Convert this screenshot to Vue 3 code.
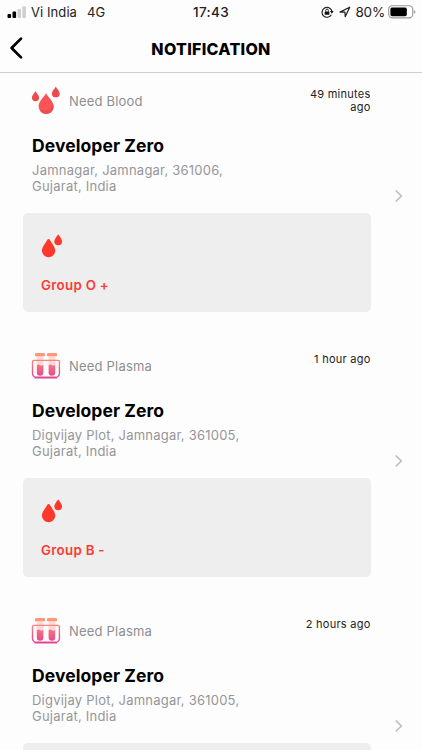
<script setup>
const requests = [
  { kind: 'blood', label: 'Need Blood', time: '49 minutes ago', name: 'Developer Zero', address: ['Jamnagar, Jamnagar, 361006,', 'Gujarat, India'], group: 'Group O +' },
  { kind: 'plasma', label: 'Need Plasma', time: '1 hour ago', name: 'Developer Zero', address: ['Digvijay Plot, Jamnagar, 361005,', 'Gujarat, India'], group: 'Group B -' },
  { kind: 'plasma', label: 'Need Plasma', time: '2 hours ago', name: 'Developer Zero', address: ['Digvijay Plot, Jamnagar, 361005,', 'Gujarat, India'], group: '' },
]
</script>

<template>
  <div class="screen">
    <div class="status">
      <div class="status-left">
        <svg class="signal" width="20" height="12" viewBox="0 0 20 12">
          <rect x="0.5" y="8" width="3.6" height="4" rx="1" fill="#000" />
          <rect x="5.5" y="5.5" width="3.6" height="6.5" rx="1" fill="#000" />
          <rect x="10.5" y="3" width="3.6" height="9" rx="1" fill="#cfcfcf" />
          <rect x="15.3" y="0.3" width="3.6" height="11.7" rx="1" fill="#cfcfcf" />
        </svg>
        <span class="carrier">Vi India</span>
        <span class="network">4G</span>
      </div>
      <div class="clock">17:43</div>
      <div class="status-right">
        <svg class="lock" width="13" height="12" viewBox="0 0 13 12" fill="none" stroke="#111">
          <path d="M10.4 8.8A5 5 0 1 1 10.9 5" stroke-width="1.1" />
          <path d="M9 5.1h3.6l-1.7 2.6z" fill="#111" stroke="none" />
          <rect x="3.7" y="5.4" width="4.7" height="3.3" rx="0.5" fill="#111" stroke="none" />
          <path d="M4.7 5.5V4.4a1.35 1.35 0 0 1 2.7 0v1.1" stroke-width="0.9" />
        </svg>
        <svg class="arrow" width="12" height="12" viewBox="0 0 12 12">
          <path d="M1 6.1L10.7 1.2L6.2 10.7L6 6.1z" fill="none" stroke="#222" stroke-width="1.2" stroke-linejoin="round" />
        </svg>
        <span class="percent">80%</span>
        <svg class="battery" width="28" height="14" viewBox="0 0 28 14">
          <rect x="0.7" y="0.7" width="24" height="12.2" rx="3.6" fill="#fff" stroke="#999" stroke-width="1.1" />
          <rect x="2.4" y="2.4" width="16.4" height="8.8" rx="1.6" fill="#000" />
          <path d="M25.8 4.7q1.7.7 1.7 2.2t-1.7 2.2z" fill="#aaa" />
        </svg>
      </div>
    </div>

    <header class="header">
      <svg class="back" width="14" height="22" viewBox="0 0 14 22">
        <path d="M12 1.6L2.6 11L12 20.4" fill="none" stroke="#000" stroke-width="2.7" stroke-linecap="round" stroke-linejoin="round" />
      </svg>
      <h1 class="title">NOTIFICATION</h1>
    </header>

    <main class="list">
      <article v-for="(item, i) in requests" :key="i" class="item">
        <div class="body">
          <div class="top">
            <svg v-if="item.kind === 'blood'" class="kind" width="30" height="30" viewBox="0 0 30 30">
              <path d="M15 7C16.5 10.6 22.6 15.2 22.6 20.4A7.4 7.4 0 0 1 7.6 20.4C7.6 15.2 13.5 10.6 15 7z" fill="#f95456" />
              <path d="M21.6 16.9c.7 1.2 1 2.3 1 3.5a7.4 7.4 0 0 1-13.8 3.7c6.4 1.7 12.2-1.6 12.8-7.2z" fill="#ee4c50" />
              <path d="M4.5 5C5.3 7.2 8.1 9.2 8.1 11.6a3.6 3.6 0 0 1-7.2 0C.9 9.2 3.7 7.2 4.5 5z" fill="#ea4b4f" />
              <path d="M24.8.6c.8 2.2 3.9 4.3 3.9 6.8a3.9 3.9 0 0 1-7.8 0c0-2.5 3.1-4.6 3.9-6.8z" fill="#ea4b4f" />
            </svg>
            <svg v-else class="kind" width="30" height="30" viewBox="0 0 30 30">
              <defs>
                <linearGradient :id="'tube' + i" x1="0" y1="1" x2="0" y2="28" gradientUnits="userSpaceOnUse">
                  <stop offset="0" stop-color="#ffa179" />
                  <stop offset="0.45" stop-color="#f5777f" />
                  <stop offset="1" stop-color="#e23e92" />
                </linearGradient>
              </defs>
              <g :fill="`url(#tube${i})`">
                <path d="M5.5 5.2h7v8.5h-7zM17.5 5.2h7v8.5h-7z" opacity="0.3" />
                <rect x="4" y="2" width="10" height="3.3" rx="0.7" />
                <rect x="16" y="2" width="10" height="3.3" rx="0.7" />
                <path d="M5.8 14q1.6-1.2 3.3 0t3.3-.2v7.7a3.3 3.3 0 0 1-6.6 0zM17.6 14q1.6-1.2 3.3 0t3.3-.2v7.7a3.3 3.3 0 0 1-6.6 0z" />
                <rect x="3.3" y="25.6" width="23" height="1.8" rx="0.6" />
              </g>
              <path d="M4 9.4H2.9A1.4 1.4 0 0 0 1.5 10.8V22.5q0 2.6 2.2 3.4M3.6 9.4h22.8M26 9.4h1a1.4 1.4 0 0 1 1.4 1.4V22.5q0 2.6-2.2 3.4" fill="none" :stroke="`url(#tube${i})`" stroke-width="1.4" />
            </svg>
            <span class="label">{{ item.label }}</span>
            <time class="time">{{ item.time }}</time>
          </div>
          <h2 class="name">{{ item.name }}</h2>
          <p class="address">
            <span v-for="line in item.address" :key="line" class="line">{{ line }}</span>
          </p>
          <div class="card">
            <svg class="drops" width="24" height="26" viewBox="0 0 24 26" fill="#ff382e">
              <path d="M7.6 5q.9 0 1.7 1.4c1.8 3 5 6.9 5 10.2a6.7 6.7 0 0 1-13.4 0c0-3.3 3.2-7.2 5-10.2q.8-1.4 1.7-1.4z" />
              <path d="M17.2.8q.6 0 1.1.9c1 1.7 2.8 3.7 2.8 5.6a3.9 3.9 0 0 1-7.8 0c0-1.9 1.8-3.9 2.8-5.6q.5-.9 1.1-.9z" />
            </svg>
            <span v-if="item.group" class="group">{{ item.group }}</span>
          </div>
        </div>
        <svg class="chevron" width="8" height="12" viewBox="0 0 8 12">
          <path d="M1.2 1L6.4 6L1.2 11" fill="none" stroke="#bdbdc0" stroke-width="1.7" stroke-linecap="round" stroke-linejoin="round" />
        </svg>
      </article>
    </main>
  </div>
</template>

<style>
body { margin: 0; background: #fdfdfd; overflow: hidden; }
</style>

<style scoped>
* { box-sizing: border-box; }
.screen {
  width: 422px;
  height: 750px;
  overflow: hidden;
  background: #fdfdfd;
  font-family: Inter, "Liberation Sans", sans-serif;
  color: #000;
}
.status {
  height: 24px;
  display: grid;
  grid-template-columns: 1fr auto 1fr;
  align-items: center;
  font-size: 13px;
  line-height: 16px;
  color: #222;
}
.status-left, .status-right { display: flex; align-items: center; }
.status-left { padding-left: 7px; }
.signal { margin-top: -1px; }
.carrier { margin-left: 4px; letter-spacing: 0.08px; }
.network { margin-left: 10px; }
.clock { font-weight: 500; font-size: 13.5px; letter-spacing: 0.35px; }
.status-right { justify-content: flex-end; padding-right: 6px; }
.arrow { margin-left: 5px; }
.percent { margin-left: 4px; font-size: 13.5px; letter-spacing: -0.2px; }
.battery { margin-left: 3px; margin-top: -1px; }
.header {
  height: 49px;
  padding-left: 9px;
  border-bottom: 1px solid #cfcfcf;
  display: grid;
  grid-template-columns: 14px 1fr 23px;
  align-items: center;
}
.title {
  margin: 2px 0 0;
  text-align: center;
  font-size: 16px;
  line-height: 20px;
  font-weight: 800;
  letter-spacing: 0.3px;
}
.list { padding: 10px 19px 0 23px; display: flex; flex-direction: column; gap: 36.5px; }
.item { height: 228.5px; display: flex; align-items: center; justify-content: space-between; }
.body { width: 347.5px; height: 228.5px; display: flex; flex-direction: column; }
.top { height: 38px; padding: 3px 0 0 8px; display: flex; align-items: flex-start; flex: none; }
.kind { flex: none; }
.label {
  margin: 6px 0 0 8px;
  font-size: 13px;
  line-height: 18px;
  letter-spacing: 0.2px;
  color: #8e8e93;
}
.time {
  margin: 2px 0 0 auto;
  width: 70px;
  text-align: right;
  font-size: 11px;
  line-height: 13px;
  letter-spacing: 0.25px;
  color: #222;
}
.name {
  margin: 14px 0 0 9px;
  font-size: 17.5px;
  line-height: 22px;
  font-weight: 650;
  letter-spacing: 0.08px;
}
.address {
  margin: 6px 0 0 9px;
  font-size: 13px;
  line-height: 15.5px;
  letter-spacing: 0.23px;
  color: #96969a;
}
.line { display: block; }
.card {
  margin-top: auto;
  height: 98.5px;
  padding: 21px 0 0 18px;
  border-radius: 5px;
  background: #eeeeee;
  display: flex;
  flex-direction: column;
  align-items: flex-start;
}
.group {
  margin-top: 16px;
  font-size: 13.3px;
  line-height: 18px;
  font-weight: 600;
  letter-spacing: 0.3px;
  color: #fb3b33;
}
.chevron { margin-bottom: 2px; }
</style>
